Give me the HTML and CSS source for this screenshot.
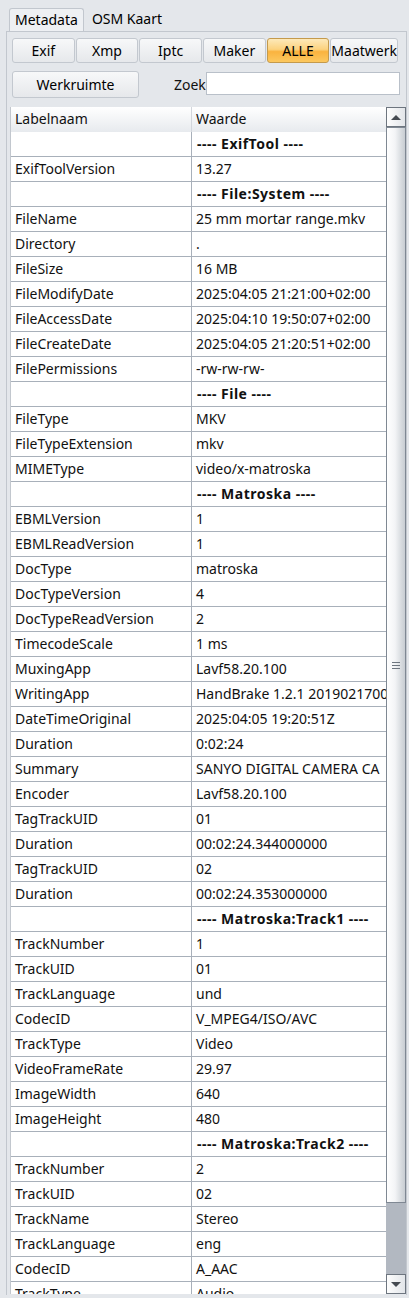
FILE: index.html
```html
<!DOCTYPE html>
<html lang="nl">
<head>
    <meta charset="UTF-8">
    <meta name="viewport" content="width=device-width, initial-scale=1.0">
    <title>Metadata</title>
    <link rel="stylesheet" href="styles.css">
</head>
<body>
    <div class="tabs">
        <div class="tab active">Metadata</div>
        <div class="tab">OSM Kaart</div>
    </div>
    <div class="panel">
        <div class="groups">
            <button class="btn">Exif</button>
            <button class="btn">Xmp</button>
            <button class="btn">Iptc</button>
            <button class="btn">Maker</button>
            <button class="btn on">ALLE</button>
            <button class="btn">Maatwerk</button>
        </div>
        <div class="search-row">
            <button class="btn work">Werkruimte</button>
            <label class="zoek" for="zoek">Zoek</label>
            <input id="zoek" class="zoek-input" type="text">
        </div>
        <div class="grid-wrap">
            <div class="grid">
                <div class="row head">
                    <div class="cell">Labelnaam</div>
                    <div class="cell">Waarde</div>
                </div>
                <div id="rows"></div>
            </div>
            <div class="scrollbar">
                <div class="sb-btn up"><span class="arrow"></span></div>
                <div class="sb-thumb"><span class="grip"></span></div>
                <div class="sb-track"></div>
                <div class="sb-btn down"><span class="arrow"></span></div>
            </div>
        </div>
    </div>

    <script>
        // lege label = groepskop
        const data = [
            ['', '---- ExifTool ----'],
            ['ExifToolVersion', '13.27'],
            ['', '---- File:System ----'],
            ['FileName', '25 mm mortar range.mkv'],
            ['Directory', '.'],
            ['FileSize', '16 MB'],
            ['FileModifyDate', '2025:04:05 21:21:00+02:00'],
            ['FileAccessDate', '2025:04:10 19:50:07+02:00'],
            ['FileCreateDate', '2025:04:05 21:20:51+02:00'],
            ['FilePermissions', '-rw-rw-rw-'],
            ['', '---- File ----'],
            ['FileType', 'MKV'],
            ['FileTypeExtension', 'mkv'],
            ['MIMEType', 'video/x-matroska'],
            ['', '---- Matroska ----'],
            ['EBMLVersion', '1'],
            ['EBMLReadVersion', '1'],
            ['DocType', 'matroska'],
            ['DocTypeVersion', '4'],
            ['DocTypeReadVersion', '2'],
            ['TimecodeScale', '1 ms'],
            ['MuxingApp', 'Lavf58.20.100'],
            ['WritingApp', 'HandBrake 1.2.1 2019021700'],
            ['DateTimeOriginal', '2025:04:05 19:20:51Z'],
            ['Duration', '0:02:24'],
            ['Summary', 'SANYO DIGITAL CAMERA CA'],
            ['Encoder', 'Lavf58.20.100'],
            ['TagTrackUID', '01'],
            ['Duration', '00:02:24.344000000'],
            ['TagTrackUID', '02'],
            ['Duration', '00:02:24.353000000'],
            ['', '---- Matroska:Track1 ----'],
            ['TrackNumber', '1'],
            ['TrackUID', '01'],
            ['TrackLanguage', 'und'],
            ['CodecID', 'V_MPEG4/ISO/AVC'],
            ['TrackType', 'Video'],
            ['VideoFrameRate', '29.97'],
            ['ImageWidth', '640'],
            ['ImageHeight', '480'],
            ['', '---- Matroska:Track2 ----'],
            ['TrackNumber', '2'],
            ['TrackUID', '02'],
            ['TrackName', 'Stereo'],
            ['TrackLanguage', 'eng'],
            ['CodecID', 'A_AAC'],
            ['TrackType', 'Audio']
        ];

        let html = '';
        data.forEach(function (r) {
            let cls = r[0] === '' ? 'row group' : 'row';
            html += '<div class="' + cls + '"><div class="cell">' + r[0] + '</div><div class="cell">' + r[1] + '</div></div>';
        });
        document.getElementById('rows').innerHTML = html;
    </script>
</body>
</html>
```
FILE: styles.css
```css
* {
    margin: 0;
    box-sizing: border-box;
}

body {
    background-color: #e4e7eb;
    font-family: "Noto Sans", "Open Sans", sans-serif;
    font-size: 14px;
    color: #111;
    overflow: hidden;
}

.tabs {
    display: flex;
    padding: 8px 0 0 9px;
    height: 31px;
}

.tab {
    padding: 0 5px;
    line-height: 22px;
    font-size: 14px;
    color: #000;
}

.tab.active {
    background-color: #eef0f3;
    border: 1px solid #c2c7ce;
    border-bottom: none;
    border-radius: 3px 3px 0 0;
    margin-right: 3px;
}

.panel {
    margin: 0 2px 0 6px;
    height: 1264px;
    border: 1px solid #c2c7ce;
    border-bottom: none;
    padding: 6px 0 0 3px;
}

.btn {
    font-family: inherit;
    font-size: 14px;
    color: #000;
    background: linear-gradient(#f7f8f9, #e6e8eb);
    border: 1px solid #c3c8cf;
    border-radius: 3px;
    padding: 0;
}

.btn.on {
    background: linear-gradient(#fde9b9 0%, #fcd27e 45%, #fab33f 55%, #fcc85f 100%);
    border-color: #c49a4c;
}

.groups {
    display: grid;
    grid-template-columns: repeat(6, 1fr);
    gap: 1px;
    width: 386px;
    height: 25px;
    margin-left: 2px;
}

.search-row {
    display: flex;
    align-items: center;
    margin: 8px 0 0 2px;
    height: 27px;
}

.btn.work {
    width: 127px;
    height: 27px;
}

.zoek {
    margin-left: 35px;
    width: 32px;
    font-size: 14px;
}

.zoek-input {
    width: 194px;
    height: 23px;
    border: 1px solid #b9c0c9;
    background-color: #fff;
    align-self: flex-start;
    margin-top: 1px;
}

.grid-wrap {
    display: flex;
    margin-top: 9px;
    height: 1187px;
    border-left: 1px solid #c2c7ce;
    background-color: #fff;
}

.grid {
    flex: 1;
    overflow: hidden;
}

.row {
    display: grid;
    grid-template-columns: 181px 1fr;
    height: 25px;
    border-bottom: 1px solid #a8b0ba;
    background-color: #fff;
}

.row .cell {
    padding-left: 4px;
    line-height: 24px;
    white-space: nowrap;
    overflow: hidden;
}

.row .cell:first-child {
    border-right: 1px solid #a8b0ba;
}

.row.head {
    background: linear-gradient(#ffffff, #e7eaee);
    border-bottom: none;
}

.row.head .cell:first-child {
    border-right: 1px solid #d2d6dc;
}

.row.group .cell:last-child {
    font-weight: bold;
    padding-left: 5px;
    letter-spacing: 0.5px;
}

.scrollbar {
    width: 20px;
    display: flex;
    flex-direction: column;
    background-color: #b2b8c1;
}

.sb-btn {
    height: 20px;
    border: 1px solid #6d757f;
    background: linear-gradient(90deg, #fdfdfd, #e2e5e9);
    display: flex;
    align-items: center;
    justify-content: center;
}

.arrow {
    width: 0;
    height: 0;
    border-left: 5px solid transparent;
    border-right: 5px solid transparent;
}

.up .arrow {
    border-bottom: 5px solid #454a51;
}

.down .arrow {
    border-top: 5px solid #454a51;
}

.sb-thumb {
    height: 1076px;
    border: 1px solid #7f8893;
    background: linear-gradient(90deg, #ffffff 0%, #f3f4f6 45%, #d6dade 80%, #c8cdd3 100%);
    display: flex;
    align-items: center;
    justify-content: center;
}

.grip {
    width: 8px;
    height: 7px;
    border-top: 1px solid #6e7680;
    border-bottom: 1px solid #6e7680;
    background: linear-gradient(transparent 2px, #6e7680 2px, #6e7680 3px, transparent 3px);
}

.sb-track {
    flex: 1;
}
```
